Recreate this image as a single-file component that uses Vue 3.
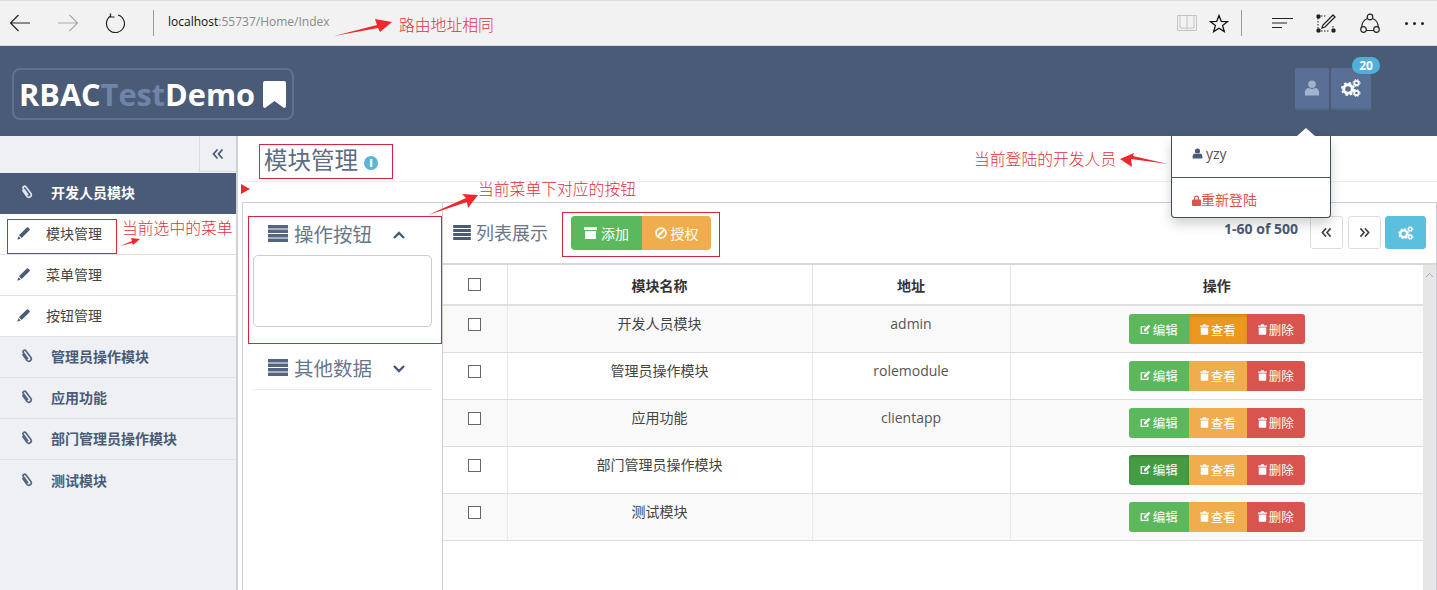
<script setup>
// 模块管理页面
const subMenus = ['模块管理', '菜单管理', '按钮管理']
const otherMenus = ['管理员操作模块', '应用功能', '部门管理员操作模块', '测试模块']
const rows = [
  { name: '开发人员模块', addr: 'admin', state: 'view' },
  { name: '管理员操作模块', addr: 'rolemodule', state: '' },
  { name: '应用功能', addr: 'clientapp', state: '' },
  { name: '部门管理员操作模块', addr: '', state: 'edit' },
  { name: '测试模块', addr: '', state: '' }
]
</script>

<template>
  <div class="page">
    <svg class="defs" width="0" height="0">
      <symbol id="i-bars" viewBox="0 0 20 17"><path d="M0 0h20v3.4H0zM0 4.5h20v3.4H0zM0 9h20v3.4H0zM0 13.500h20v3.400H0z" fill="currentColor"/></symbol>
      <symbol id="i-pencil" viewBox="0 0 14 14"><path d="M10.600.5a1 1 0 0 1 1.400 0l1.500 1.500a1 1 0 0 1 0 1.400L5 11.900 2.100 9zM1.500 10 4 12.500.4 13.600z" fill="currentColor"/></symbol>
      <symbol id="i-clip" viewBox="0 0 14 14"><path d="M2.500 5 7 11.500a2.500 2.500 0 0 0 4-2.900L6 1.900a1.600 1.600 0 0 0-2.600 1.900L8 10" fill="none" stroke="currentColor" stroke-width="1.700"/></symbol>
      <symbol id="i-user" viewBox="0 0 14 14"><circle cx="7" cy="3.800" r="3.300" fill="currentColor"/><path d="M.8 13.500V10.500C.8 8.500 2.500 7 4 7c1 .8 5 .8 6 0 1.500 0 3.200 1.500 3.200 3.500v3z" fill="currentColor"/></symbol>
      <symbol id="i-gears" viewBox="0 0 20 18">
        <circle cx="7" cy="10" r="4.300" fill="none" stroke="currentColor" stroke-width="3"/>
        <circle cx="7" cy="10" r="6.100" fill="none" stroke="currentColor" stroke-width="1.800" stroke-dasharray="2.400 2.400"/>
        <circle cx="15.500" cy="4" r="2.200" fill="none" stroke="currentColor" stroke-width="1.800"/>
        <circle cx="15.500" cy="4" r="3.500" fill="none" stroke="currentColor" stroke-width="1" stroke-dasharray="1.500 1.300"/>
        <circle cx="15.500" cy="14" r="2.200" fill="none" stroke="currentColor" stroke-width="1.800"/>
        <circle cx="15.500" cy="14" r="3.500" fill="none" stroke="currentColor" stroke-width="1" stroke-dasharray="1.500 1.300"/>
      </symbol>
      <symbol id="i-edit" viewBox="0 0 14 14"><path d="M10 8.500V12H1.500V3.500H7" fill="none" stroke="currentColor" stroke-width="1.500"/><path d="M11 1 13.300 3.300 7.500 9.100H5.200V6.800z" fill="currentColor"/></symbol>
      <symbol id="i-trash" viewBox="0 0 12 14"><path d="M4.300 0h3.400l.8 1.800H12v1.500H0V1.800h3.500zM1 4.200h10V13a1 1 0 0 1-1 1H2a1 1 0 0 1-1-1z" fill="currentColor"/><path d="M4 6v6M6 6v6M8 6v6" stroke="#fff" stroke-opacity=".45" stroke-width=".8"/></symbol>
      <symbol id="i-dleft" viewBox="0 0 12 12"><path d="M5.500 1.500 1.500 6l4 4.500M10.500 1.500 6.500 6l4 4.500" fill="none" stroke="currentColor" stroke-width="1.800"/></symbol>
      <symbol id="i-dright" viewBox="0 0 12 12"><path d="M1.500 1.500 5.500 6l-4 4.500M6.500 1.500l4 4.500-4 4.500" fill="none" stroke="currentColor" stroke-width="1.800"/></symbol>
    </svg>

    <!-- 浏览器地址栏 -->
    <div class="browser">
      <svg class="b-ico" width="22" height="18" viewBox="0 0 22 18" fill="none" stroke="#222" stroke-width="1.200"><path d="M21 9H1.500M9.500 1 1.500 9l8 8"/></svg>
      <svg class="b-ico fwd" width="22" height="18" viewBox="0 0 22 18" fill="none" stroke="#aaa" stroke-width="1.200"><path d="M1 9h19.500M12.500 1l8 8-8 8"/></svg>
      <svg class="b-ico ref" width="20" height="20" viewBox="0 0 20 20" fill="none" stroke="#222" stroke-width="1.200"><path d="M6 2.800A9 9 0 1 0 13 2"/><path d="M5.500 0.500v3.500H9.500"/></svg>
      <span class="b-sep"></span>
      <div class="url">localhost<span>:55737/Home/Index</span></div>
      <div class="b-right">
        <svg width="20" height="18" viewBox="0 0 20 18" fill="none" stroke="#c4c4c4"><path d="M.5 1.500h19v15H.5zM10 1.500v15M3 1.500v12.500h14V1.500"/></svg>
        <svg class="star" width="20" height="19" viewBox="0 0 20 19" fill="none" stroke="#111" stroke-width="1.300"><path d="m10 1.500 2.300 5.900 6.200.3-4.900 3.900 1.700 6-5.300-3.400-5.300 3.400 1.700-6-4.900-3.900 6.200-.3z"/></svg>
        <span class="b-sep right"></span>
        <svg class="hub" width="21" height="14" viewBox="0 0 21 14" stroke="#222" stroke-width="1.200"><path d="M0 2.500h21M0 7h15M0 11.500h10"/></svg>
        <svg class="note" width="20" height="19" viewBox="0 0 20 19" fill="none" stroke="#222"><path d="M2 4v11M17 12v3M5 2h6M5 17h9" stroke-dasharray="1.500 1.500"/><path d="M1 1h3v3H1zM1 15h3v3H1zM16 15h3v3h-3z" fill="#222"/><path d="M17 1 19 3 9 13l-3 1 1-3z" stroke-width="1.300"/></svg>
        <svg class="share" width="20" height="21" viewBox="0 0 20 21" fill="none" stroke="#222" stroke-width="1.200"><circle cx="10" cy="4" r="2.800"/><circle cx="3.500" cy="16.500" r="2.800"/><circle cx="16.500" cy="16.500" r="2.800"/><path d="M7.500 5.500A9 9 0 0 0 1.800 14M12.500 5.500A9 9 0 0 1 18.200 14M6.300 17.500h7.400"/></svg>
        <div class="dots"><i></i><i></i><i></i></div>
      </div>
    </div>

    <!-- 顶部导航 -->
    <header class="topbar">
      <div class="logo">
        <span>RBAC</span><span class="dim">Test</span><span>Demo</span>
        <svg width="23" height="27" viewBox="0 0 23 27"><path d="M2 0h19a2 2 0 0 1 2 2v23a2 2 0 0 1-2 2l-9.500-7L2 27a2 2 0 0 1-2-2V2a2 2 0 0 1 2-2z" fill="#fff"/></svg>
      </div>
      <div class="top-btns">
        <button class="top-btn user"><svg width="16" height="16"><use href="#i-user"/></svg></button>
        <button class="top-btn gear">
          <svg width="20" height="18"><use href="#i-gears"/></svg>
          <span class="badge">20</span>
        </button>
      </div>
    </header>

    <div class="body">
      <!-- 左侧菜单 -->
      <aside class="sidebar">
        <div class="collapse"><button><svg width="12" height="12"><use href="#i-dleft"/></svg></button></div>
        <div class="menu-item active"><svg width="14" height="14"><use href="#i-clip"/></svg>开发人员模块</div>
        <div v-for="m in subMenus" :key="m" class="sub-item"><svg width="13" height="13"><use href="#i-pencil"/></svg>{{ m }}</div>
        <div v-for="m in otherMenus" :key="m" class="menu-item"><svg width="14" height="14"><use href="#i-clip"/></svg>{{ m }}</div>
      </aside>

      <main class="main">
        <div class="title-row">
          <h1>模块管理</h1>
          <span class="info">i</span>
        </div>

        <div class="panel">
          <!-- 操作按钮 / 其他数据 -->
          <section class="left">
            <div class="acc-head">
              <svg width="20" height="17"><use href="#i-bars"/></svg>
              <span>操作按钮</span>
              <svg class="chev" width="12" height="8" viewBox="0 0 12 8" fill="none" stroke="currentColor" stroke-width="2.400"><path d="m1 7 5-5 5 5"/></svg>
            </div>
            <div class="acc-box"></div>
            <div class="acc-head second">
              <svg width="20" height="17"><use href="#i-bars"/></svg>
              <span>其他数据</span>
              <svg class="chev" width="12" height="8" viewBox="0 0 12 8" fill="none" stroke="currentColor" stroke-width="2.400"><path d="m1 1 5 5 5-5"/></svg>
            </div>
          </section>

          <!-- 列表 -->
          <section class="right">
            <div class="toolbar">
              <svg class="tb-bars" width="18" height="15"><use href="#i-bars"/></svg>
              <span class="tb-title">列表展示</span>
              <div class="tb-group">
                <button class="btn green">
                  <svg width="13" height="12" viewBox="0 0 13 12"><path d="M0 0h13v3H0zM1 4h11v8H1z" fill="currentColor"/></svg>添加
                </button>
                <button class="btn orange">
                  <svg width="12" height="12" viewBox="0 0 12 12" fill="none" stroke="currentColor" stroke-width="1.800"><circle cx="6" cy="6" r="4.900"/><path d="m2.500 9.500 7-7"/></svg>授权
                </button>
              </div>
              <div class="pager">
                <span class="count">1-60 of 500</span>
                <button class="page-btn"><svg width="11" height="11"><use href="#i-dleft"/></svg></button>
                <button class="page-btn"><svg width="11" height="11"><use href="#i-dright"/></svg></button>
                <button class="page-btn blue"><svg width="16" height="14"><use href="#i-gears"/></svg></button>
              </div>
            </div>

            <div class="table-wrap">
              <table>
                <thead>
                  <tr>
                    <th class="c-check"><span class="check"></span></th>
                    <th class="c-name">模块名称</th>
                    <th class="c-addr">地址</th>
                    <th>操作</th>
                  </tr>
                </thead>
                <tbody>
                  <tr v-for="r in rows" :key="r.name">
                    <td class="c-check"><span class="check"></span></td>
                    <td>{{ r.name }}</td>
                    <td class="addr">{{ r.addr }}</td>
                    <td class="ops">
                      <div class="op-group">
                        <button class="op op-edit" :class="{ pressed: r.state === 'edit' }"><svg width="11" height="11"><use href="#i-edit"/></svg>编辑</button>
                        <button class="op op-view" :class="{ pressed: r.state === 'view' }"><svg width="9" height="11"><use href="#i-trash"/></svg>查看</button>
                        <button class="op op-del"><svg width="9" height="11"><use href="#i-trash"/></svg>删除</button>
                      </div>
                    </td>
                  </tr>
                </tbody>
              </table>
              <div class="scrollbar"><svg width="9" height="6" viewBox="0 0 9 6" fill="none" stroke="#aaa"><path d="m1 5 3.500-3.500L8 5"/></svg></div>
            </div>
          </section>
        </div>
      </main>
    </div>

    <!-- 用户下拉菜单 -->
    <div class="caret"></div>
    <div class="dropdown">
      <div class="dd-user"><svg width="11" height="11"><use href="#i-user"/></svg>yzy</div>
      <div class="dd-login">
        <svg width="9" height="11" viewBox="0 0 9 11"><path d="M2 4.500V3a2.500 2.500 0 0 1 5 0v1.500h1a1 1 0 0 1 1 1V10a1 1 0 0 1-1 1H1a1 1 0 0 1-1-1V5.500a1 1 0 0 1 1-1zm1.300 0h2.400V3a1.200 1.200 0 0 0-2.400 0z" fill="currentColor"/></svg>重新登陆
      </div>
    </div>

    <!-- 截图上的红色标注 -->
    <span class="note-text n-route">路由地址相同</span>
    <span class="note-text n-menu">当前选中的菜单</span>
    <span class="note-text n-btns">当前菜单下对应的按钮</span>
    <span class="note-text n-dev">当前登陆的开发人员</span>
    <div class="mark m-menu"></div>
    <div class="mark m-title"></div>
    <div class="mark m-left"></div>
    <div class="mark m-group"></div>
    <svg class="arrows" width="1437" height="590" fill="#f0282d">
      <path d="M334 36 377 25 375 19 392 22 380 32 378 28z"/>
      <path d="M120 246 132 241 131 238 140 239 133 245 132 243z"/>
      <path d="M241 184 250 189 241 194z"/>
      <path d="M428 215 466 198 462 194 478 195 468 208 467 202z"/>
      <path d="M1168 164 1131 159 1132 167 1120 159 1134 153 1133 156z"/>
    </svg>
  </div>
</template>

<style>
html, body { margin: 0; overflow: hidden; background: #fff; }
</style>

<style scoped>
.page {
  position: relative; width: 1437px; height: 590px; overflow: hidden;
  font-family: "Open Sans", "Noto Sans CJK SC", sans-serif; font-size: 14px; color: #333;
}
.defs { position: absolute; }
button { font-family: inherit; border: 0; padding: 0; margin: 0; }

/* 浏览器栏 */
.browser {
  height: 46px; box-sizing: border-box; display: flex; align-items: center;
  padding: 0 13px 0 9px; background: #f2f2f2; border-top: 1px solid #dcdcdc; border-bottom: 1px solid #d8dce0;
}
.b-ico { flex: none; }
.fwd { margin-left: 26px; }
.ref { margin-left: 26px; }
.b-sep { width: 1px; height: 26px; background: #999; margin-left: 28px; }
.url { margin-left: 14px; margin-top: -4px; font-size: 12px; color: #111; }
.url span { color: #8a8a8a; }
.b-right { margin-left: auto; display: flex; align-items: center; }
.star { margin-left: 12px; }
.b-sep.right { margin-left: 12px; }
.hub { margin-left: 30px; }
.note { margin-left: 23px; }
.share { margin-left: 24px; }
.dots { display: flex; gap: 5px; margin-left: 25px; }
.dots i { width: 3px; height: 3px; border-radius: 50%; background: #222; }

/* 顶部 */
.topbar {
  height: 90px; box-sizing: border-box; background: #4a5b78;
  display: flex; align-items: flex-start; justify-content: space-between; padding: 22px 66px 0 12px;
}
.logo {
  width: 282px; height: 52px; box-sizing: border-box; border: 2px solid #5f7192; border-radius: 8px;
  display: flex; align-items: center; padding-left: 5px; font-size: 30.700px; font-weight: 700; color: #fff;
  white-space: nowrap;
}
.logo .dim { color: #6f84a8; }
.logo svg { margin-left: 8px; }
.top-btns { display: flex; gap: 2px; }
.top-btn {
  position: relative; height: 42px; display: flex; align-items: center; justify-content: center;
  background: #5a6f95; border-radius: 2px; border-bottom: 2px solid #536889; box-sizing: border-box;
}
.top-btn.user { width: 34px; color: #a3b3cd; }
.top-btn.gear { width: 40px; color: #fff; }
.badge {
  position: absolute; top: -11px; left: 21px; width: 28px; height: 17px; border-radius: 9px;
  background: #4fb0d8; color: #fff; font-size: 12px; font-weight: 700; line-height: 17px; text-align: center;
}

.body { display: flex; height: 454px; }

/* 侧边栏 */
.sidebar {
  width: 238px; flex: none; box-sizing: border-box; background: #eef0f3; border-right: 2px solid #cfd3d8;
  font-size: 14px;
}
.collapse { height: 37px; display: flex; justify-content: flex-end; box-sizing: border-box; }
.collapse button {
  width: 37px; height: 36px; background: #eef0f3; border-left: 1px solid #d9dce1; border-bottom: 1px solid #d9dce1;
  color: #4a5b78; display: flex; align-items: center; justify-content: center;
}
.menu-item {
  height: 41px; box-sizing: border-box; display: flex; align-items: center; padding: 0 0 2px 20px; gap: 17px;
  font-weight: 700; color: #4a5b78; border-bottom: 1px solid #dfe2e6;
}
.menu-item:last-child { border-bottom: 0; }
.menu-item.active { background: #4a5b78; color: #fff; border-bottom: 0; padding-bottom: 4px; }
.menu-item svg { color: #55657f; }
.menu-item.active svg { color: #dfe5ee; }
.sub-item {
  height: 41px; box-sizing: border-box; display: flex; align-items: center; padding: 0 0 2px 17px; gap: 16px;
  background: #fff; border-bottom: 1px solid #dfe2e6; color: #444;
}
.sub-item svg { color: #4a5b78; }

/* 主区域 */
.main { flex: 1; min-width: 0; padding-left: 4px; }
.title-row {
  height: 46px; box-sizing: border-box; display: flex; align-items: center; padding: 4px 0 0 22px;
  border-bottom: 1px solid #eee;
}
.title-row h1 { margin: 0; font-size: 23.500px; font-weight: 400; color: #5b6d84; line-height: 1; }
.info {
  width: 14px; height: 14px; border-radius: 50%; background: #5bb3d8; color: #fff; margin: 4px 0 0 6px;
  font-size: 11px; font-weight: 800; line-height: 14px; text-align: center;
}
.panel {
  margin-top: 20px; height: 400px; box-sizing: border-box; border: 1px solid #ccd0d6; border-bottom: 0;
  display: flex; width: 1195px;
}
.left { width: 200px; flex: none; box-sizing: border-box; border-right: 1px solid #ccd0d6; padding: 0 10px; }
.acc-head { display: flex; align-items: center; color: #556480; padding-left: 15px; height: 45px; margin-top: 8px; }
.acc-head span { font-size: 19.500px; margin-left: 6px; color: #6a7788; }
.acc-head .chev { margin-left: 21px; margin-top: 3px; color: #4a5b78; }
.acc-box { height: 72px; box-sizing: border-box; border: 1px solid #c9ccd0; border-radius: 5px; margin-top: -1px; }
.acc-head.second { margin-top: 18px; height: 44px; border-bottom: 1px solid #f0f0f0; }

.right { flex: 1; min-width: 0; }
.toolbar { height: 60px; box-sizing: border-box; display: flex; align-items: flex-start; padding: 13px 10px 0 10px; }
.tb-bars { margin-top: 9px; color: #4a5b78; }
.tb-title { font-size: 18px; color: #6a7788; margin: 4px 0 0 5px; line-height: 26px; }
.tb-group { display: flex; margin-left: 23px; }
.btn {
  height: 34px; display: flex; align-items: center; justify-content: center; gap: 4px; color: #fff; font-size: 14px;
}
.btn.green { width: 71px; background: #5cb85c; border-radius: 4px 0 0 4px; }
.btn.orange { width: 69px; background: #f0ad4e; border-radius: 0 4px 4px 0; }
.pager { margin-left: auto; display: flex; align-items: flex-start; }
.count { font-size: 14px; font-weight: 700; color: #4a5b78; margin: 3px 12px 0 0; line-height: 20px; }
.page-btn {
  width: 33px; height: 33px; margin-left: 5px; box-sizing: border-box; background: #fff;
  border: 1px solid #ddd; border-radius: 3px; color: #444;
  display: flex; align-items: center; justify-content: center;
}
.page-btn:first-of-type { margin-left: 0; }
.page-btn.blue { width: 41px; margin-left: 4px; background: #5bc0de; border-color: #5bc0de; color: #fff; }

.table-wrap { display: flex; height: 340px; border-top: 2px solid #d5d8dc; box-sizing: border-box; }
table { width: 980px; height: 0; flex: none; border-collapse: collapse; table-layout: fixed; font-size: 14px; }
th { height: 40px; font-weight: 700; color: #333; border-right: 1px solid #e3e3e3; border-bottom: 2px solid #e0e0e0; box-sizing: border-box; padding: 0; }
th:last-child, td:last-child { border-right: 0; }
td { height: 47px; box-sizing: border-box; padding: 8px 0 0; vertical-align: top; text-align: center; line-height: 20px; border-right: 1px solid #e8e8e8; border-bottom: 1px solid #dedede; color: #444; }
tbody tr:nth-child(odd) td { background: #f9f9f9; }
.c-check { width: 64px; }
.c-name { width: 305px; }
.c-addr { width: 198px; }
.check { display: inline-block; width: 13px; height: 13px; box-sizing: border-box; border: 1px solid #666; vertical-align: middle; background: #fff; }
th .check { margin-bottom: 3px; }
td.c-check { padding-top: 12px; line-height: 13px; }
td.c-check .check { display: block; margin: 0 auto; }
.addr { color: #555; }
.ops { padding-top: 8px; }
.op-group { display: inline-flex; vertical-align: top; }
.op { height: 30px; color: #fff; font-size: 12.500px; display: flex; align-items: center; justify-content: center; gap: 2px; width: 58px; }
.op-edit { width: 60px; background: #5cb85c; border-radius: 3px 0 0 3px; }
.op-edit.pressed { background: #449d44; box-shadow: inset 0 2px 3px rgba(0, 0, 0, .15); }
.op-view { background: #f0ad4e; }
.op-view.pressed { background: #ec971f; box-shadow: inset 0 2px 3px rgba(0, 0, 0, .12); }
.op-del { background: #d9534f; border-radius: 0 3px 3px 0; }
.scrollbar { flex: 1; background: #e6e6e6; text-align: center; line-height: 10px; padding-top: 3px; }

/* 下拉菜单 */
.caret {
  position: absolute; left: 1297px; top: 128px; width: 0; height: 0;
  border: 9px solid transparent; border-top: 0; border-bottom: 8px solid #fff;
}
.dropdown {
  position: absolute; left: 1171px; top: 136px; width: 160px; height: 82px; box-sizing: border-box;
  background: #fff; border: 1px solid #3f4a5c; border-top: 0; border-radius: 0 0 4px 4px;
  box-shadow: 0 6px 12px rgba(0, 0, 0, .18);
}
.dd-user {
  height: 42px; box-sizing: border-box; border-bottom: 1px solid #4a5068; display: flex; align-items: center;
  padding: 0 0 6px 20px; gap: 3px; color: #555; font-size: 14px;
}
.dd-user svg { color: #4a5b78; }
.dd-login { display: flex; align-items: center; padding: 13px 0 0 20px; gap: 0; color: #d9534f; font-size: 14px; line-height: 18px; }

/* 标注 */
.note-text { position: absolute; font-size: 15.800px; color: #e0323c; line-height: 20px; white-space: nowrap; font-family: "Noto Sans CJK SC", sans-serif; font-weight: 300; }
.n-route { left: 399px; top: 15px; }
.n-menu { left: 122px; top: 218px; }
.n-btns { left: 478px; top: 179px; }
.n-dev { left: 974px; top: 149px; }
.mark { position: absolute; box-sizing: border-box; border: 1px solid #d8253a; }
.m-menu { left: 7px; top: 219px; width: 110px; height: 35px; }
.m-title { left: 259px; top: 144px; width: 134px; height: 35px; }
.m-left { left: 248px; top: 216px; width: 194px; height: 128px; }
.m-group { left: 562px; top: 212px; width: 158px; height: 45px; }
.arrows { position: absolute; left: 0; top: 0; pointer-events: none; }
</style>
